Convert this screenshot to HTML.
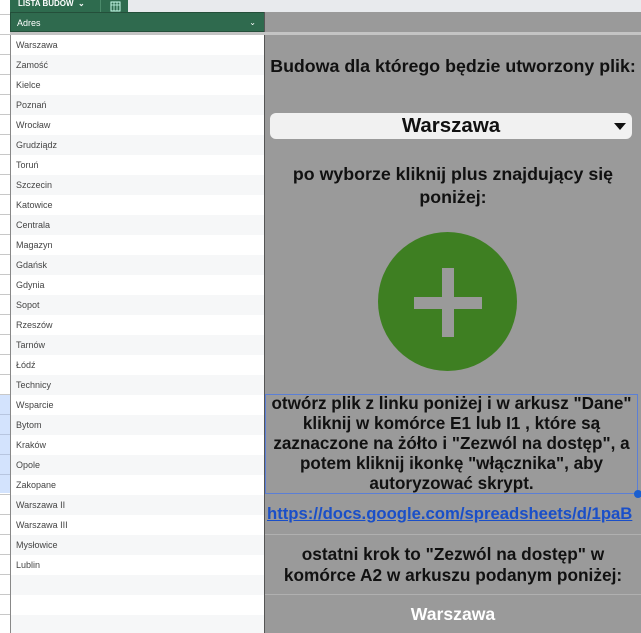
<!DOCTYPE html>
<html><head><meta charset="utf-8"><style>
*{margin:0;padding:0;box-sizing:border-box}
body{width:641px;height:633px;overflow:hidden;background:#fff;position:relative;font-family:"Liberation Sans",Arial,sans-serif}
.abs{position:absolute}
#top{left:0;top:0;width:641px;height:12px;background:#e8eaed}
#gut{left:0;top:0;width:10px;height:633px;background:#fff;background-image:repeating-linear-gradient(to bottom,transparent 0 14px,#c8c8c8 14px 15px,transparent 15px 20px)}
#blue{left:0;top:395px;width:10px;height:98px;background:#d3e3fd;background-image:repeating-linear-gradient(to bottom,transparent 0 19px,#b8c6e0 19px 20px)}
#tab{left:10px;top:0;width:90px;height:12px;background:#2e6b4e;color:#fff;font-size:8px;font-weight:bold;line-height:8px;padding-left:8px}
#tab2{left:100px;top:0;width:28px;height:12px;background:#2e6b4e;border-left:1px solid #4a8a6a}
#hdr{left:10px;top:12px;width:255px;height:20px;background:#2f6a4e;color:#fff;font-size:9px;line-height:20px;padding-left:6px;border:1px solid #244f3a}
#hdr span{position:absolute;right:8px;top:0;font-size:8px}
#strip{left:10px;top:32px;width:631px;height:3px;background:#c4c4c4}
#list{left:10px;top:35px;width:254px;height:598px;border-left:1px solid #888;background:repeating-linear-gradient(to bottom,#fff 0 20px,#f6f7f8 20px 40px)}
#list div{height:20px;line-height:20px;font-size:9px;color:#444;padding-left:5px}
#right{left:264px;top:12px;width:377px;height:621px;background:#9a9a9a;border-left:1px solid #555}
.t{position:absolute;left:265px;width:376px;text-align:center;font-weight:bold;color:#111;font-size:17.6px;line-height:20px;white-space:nowrap}
#sel{left:270px;top:113px;width:362px;height:26px;background:#f1f1f1;border-radius:6px;font-size:20.5px;font-weight:bold;text-align:center;line-height:26px;color:#111}
#sel:after{content:"";position:absolute;right:6px;top:10px;border-left:6px solid transparent;border-right:6px solid transparent;border-top:7px solid #111}
#circ{left:378px;top:232px;width:139px;height:139px;border-radius:50%;background:#3e7f22}
#box{left:265px;top:394px;width:373px;height:100px;border:1px solid #5b7fd6}
#dot{left:634px;top:490px;width:8px;height:8px;border-radius:50%;background:#1a5fd0}
.hl{position:absolute;left:265px;width:376px;height:1px;background:#b0b0b0}
</style></head><body>
<div class="abs" id="top"></div>
<div class="abs" id="gut"></div>
<div class="abs" id="blue"></div>
<div class="abs" id="tab">LISTA BUDÓW &nbsp;⌄</div>
<div class="abs" id="tab2"><svg width="28" height="12"><rect x="10" y="1" width="9" height="9" fill="none" stroke="#cfe" stroke-width="1"/><path d="M10 4h9M13 1v9M16 1v9" stroke="#cfe" stroke-width="0.8"/></svg></div>
<div class="abs" id="hdr">Adres<span>⌄</span></div>
<div class="abs" id="right"></div>
<div class="abs" id="strip"></div>
<div class="abs" id="list">
<div>Warszawa</div><div>Zamość</div><div>Kielce</div><div>Poznań</div><div>Wrocław</div><div>Grudziądz</div><div>Toruń</div><div>Szczecin</div><div>Katowice</div><div>Centrala</div><div>Magazyn</div><div>Gdańsk</div><div>Gdynia</div><div>Sopot</div><div>Rzeszów</div><div>Tarnów</div><div>Łódź</div><div>Technicy</div><div>Wsparcie</div><div>Bytom</div><div>Kraków</div><div>Opole</div><div>Zakopane</div><div>Warszawa II</div><div>Warszawa III</div><div>Mysłowice</div><div>Lublin</div>
</div>
<div class="t" style="top:56px;font-size:17.8px">Budowa dla którego będzie utworzony plik:</div>
<div class="abs" id="sel">Warszawa</div>
<div class="t" style="top:163px;line-height:23px;font-size:17.8px">po wyborze kliknij plus znajdujący się<br>poniżej:</div>
<div class="abs" id="circ"></div>
<div class="abs" style="left:442px;top:268px;width:12px;height:69px;background:#9a9a9a"></div>
<div class="abs" style="left:414px;top:297px;width:68px;height:12px;background:#9a9a9a"></div>
<div class="t" style="left:265px;width:373px;top:394px;line-height:20px;font-size:17.1px">otwórz plik z linku poniżej i w arkusz "Dane"<br>kliknij w komórce E1 lub I1 , które są<br>zaznaczone na żółto i "Zezwól na dostęp", a<br>potem kliknij ikonkę "włącznika", aby<br>autoryzować skrypt.</div>
<div class="abs" id="box"></div>
<div class="abs" id="dot"></div>
<div class="t" style="top:504px;text-align:left;padding-left:2px;color:#1a4fc8;text-decoration:underline;overflow:hidden;font-size:16.7px">https://docs.google.com/spreadsheets/d/1paB</div>
<div class="hl" style="top:534px"></div>
<div class="t" style="top:544px;line-height:21px;font-size:17.3px">ostatni krok to "Zezwól na dostęp" w<br>komórce A2 w arkuszu podanym poniżej:</div>
<div class="hl" style="top:594px"></div>
<div class="t" style="top:604px;color:#fff">Warszawa</div>
</body></html>
